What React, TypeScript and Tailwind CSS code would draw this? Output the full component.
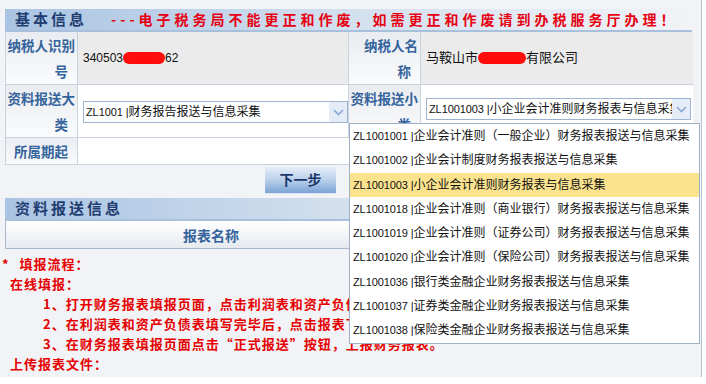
import React from "react";

const items = [
  ["ZL1001001", "企业会计准则（一般企业）财务报表报送与信息采集"],
  ["ZL1001002", "企业会计制度财务报表报送与信息采集"],
  ["ZL1001003", "小企业会计准则财务报表与信息采集"],
  ["ZL1001018", "企业会计准则（商业银行）财务报表报送与信息采集"],
  ["ZL1001019", "企业会计准则（证券公司）财务报表报送与信息采集"],
  ["ZL1001020", "企业会计准则（保险公司）财务报表报送与信息采集"],
  ["ZL1001036", "银行类金融企业财务报表报送与信息采集"],
  ["ZL1001037", "证券类金融企业财务报表报送与信息采集"],
  ["ZL1001038", "保险类金融企业财务报表报送与信息采集"],
];

const plain = { fontFamily: '"Liberation Sans", "Noto Sans CJK SC", sans-serif' };

function Code({ code, rest }: { code: string; rest: string }) {
  return (
    <>
      <span className="text-[11px] tracking-[-0.1px]">{code} |</span>
      {rest}
    </>
  );
}

function Chevron() {
  return (
    <div className="w-[18px] h-full bg-[#e4ecf7] flex items-center justify-center shrink-0">
      <svg width="11" height="7" viewBox="0 0 11 7">
        <path d="M1 1 L5.5 5.5 L10 1" fill="none" stroke="#8aa9d6" strokeWidth="1.6" />
      </svg>
    </div>
  );
}

function Select({ code, rest, width }: { code: string; rest: string; width: string }) {
  return (
    <div className={`${width} h-[22px] border border-[#9db3cf] bg-white flex items-stretch`}>
      <div className="flex-1 overflow-hidden whitespace-nowrap text-[12px] leading-[20px] pl-[2px] text-[#111]" style={plain}>
        <Code code={code} rest={rest} />
      </div>
      <Chevron />
    </div>
  );
}

function Label({ first, second }: { first: string; second?: string }) {
  return (
    <div className="bg-gradient-to-b from-[#e9ecf0] to-[#fafbfc] border-r border-b border-[#c9d3df] text-[#35649c] font-bold text-[13.5px] overflow-hidden">
      {second ? (
        <>
          <div className="h-[26px] leading-[26px] text-right pr-[2px] whitespace-nowrap">{first}</div>
          <div className="h-[26px] leading-[26px] text-right pr-[9px]">{second}</div>
        </>
      ) : (
        <div className="h-[26px] leading-[26px] text-right pr-[9px]">{first}</div>
      )}
    </div>
  );
}

function Redacted({ w }: { w: string }) {
  return <span className={`inline-block ${w} h-[12px] bg-[#ff0d0d] rounded-[6px] align-middle`} />;
}

function SectionBar({ title, children }: { title: string; children?: React.ReactNode }) {
  return (
    <div className="h-[23px] flex items-center bg-gradient-to-r from-[#a9c4e3] via-[#d3e0ee] via-50% to-[#f1f3f6] border-b-2 border-[#a9c0dc]">
      <span className="pl-[10px] text-[15px] font-bold tracking-[3px] text-[#1f3d70]">{title}</span>
      {children}
    </div>
  );
}

export default function App() {
  return (
    <div className="w-[706px] h-[384px] bg-white relative overflow-hidden" style={{ fontFamily: '"Noto Sans CJK SC", sans-serif' }}>
      <div className="w-[702px] h-[377px] bg-[#f1f3f6] border-r border-[#b7c4d5] pt-[9px] pl-[5px] pr-[9px]">
        <SectionBar title="基本信息">
          <span className="ml-[24px] text-[14px] font-bold tracking-[4px] text-[#e60012] whitespace-nowrap">
            ---电子税务局不能更正和作废，如需更正和作废请到办税服务厅办理！
          </span>
        </SectionBar>

        <div className="grid grid-cols-[72px_271px_72px_272px] border-r border-l border-[#c9d3df]">
          <Label first="纳税人识别" second="号" />
          <div className="bg-[#ebebeb] border-r border-b border-[#c9d3df] flex items-center pl-[5px] text-[12px] text-[#111]" style={plain}>
            340503<Redacted w="w-[42px]" />62
          </div>
          <Label first="纳税人名" second="称" />
          <div className="bg-[#ebebeb] border-b border-[#c9d3df] flex items-center pl-[5px] text-[13px] text-[#111]" style={plain}>
            马鞍山市<Redacted w="w-[48px]" />有限公司
          </div>

          <Label first="资料报送大" second="类" />
          <div className="bg-white border-r border-b border-[#c9d3df] pt-[16px] pl-[5px]">
            <Select code="ZL1001" rest="财务报告报送与信息采集" width="w-[265px]" />
          </div>
          <Label first="资料报送小" second="类" />
          <div className="bg-white border-b border-[#c9d3df] pt-[13px] pl-[5px]">
            <Select code="ZL1001003" rest="小企业会计准则财务报表与信息采集" width="w-[265px]" />
          </div>

          <Label first="所属期起" />
          <div className="col-span-3 bg-white border-b border-[#c9d3df]" />
        </div>

        <div className="h-[33px] pl-[260px] pt-[1px]">
          <button className="w-[71px] h-[27px] bg-gradient-to-b from-[#e6eef8] via-[#b9cfea] to-[#7aa3d4] border-b border-[#dde7f3] text-[14px] font-bold text-[#1a3768]">
            下一步
          </button>
        </div>

        <SectionBar title="资料报送信息" />
        <div className="h-[28px] flex bg-gradient-to-b from-[#ffffff] to-[#e6eaef] border-b border-l border-[#a8b9cf]">
          <div className="w-[410px] text-center text-[14px] font-bold text-[#35649c] leading-[28px]">报表名称</div>
        </div>

        <div className="pt-[5px] text-[13px] font-bold text-[#e60000] leading-[20px] tracking-[1px] -ml-[5px]">
          <div className="whitespace-nowrap"><span className="pl-[2px] pr-[10px]">*</span>填报流程：</div>
          <div className="pl-[10px]">在线填报：</div>
          <div className="pl-[43px] whitespace-nowrap">1、打开财务报表填报页面，点击利润表和资产负债表进行填写。</div>
          <div className="pl-[43px] whitespace-nowrap">2、在利润表和资产负债表填写完毕后，点击报表下方的“保存”按钮。</div>
          <div className="pl-[43px] whitespace-nowrap">3、在财务报表填报页面点击“正式报送”按钮，上报财务报表。</div>
          <div className="pl-[10px]">上传报表文件：</div>
        </div>
      </div>

      <div className="absolute left-[349px] top-[123px] w-[351px] h-[221px] bg-white border border-[#9fb1c8]">
        {items.map(([code, rest], i) => (
          <div
            key={code}
            className={`h-[24.3px] leading-[24.3px] pl-[3px] text-[12px] text-[#111] whitespace-nowrap overflow-hidden ${i === 2 ? "bg-[#fbe38e]" : ""}`}
            style={plain}
          >
            <Code code={code} rest={rest} />
          </div>
        ))}
      </div>
    </div>
  );
}
